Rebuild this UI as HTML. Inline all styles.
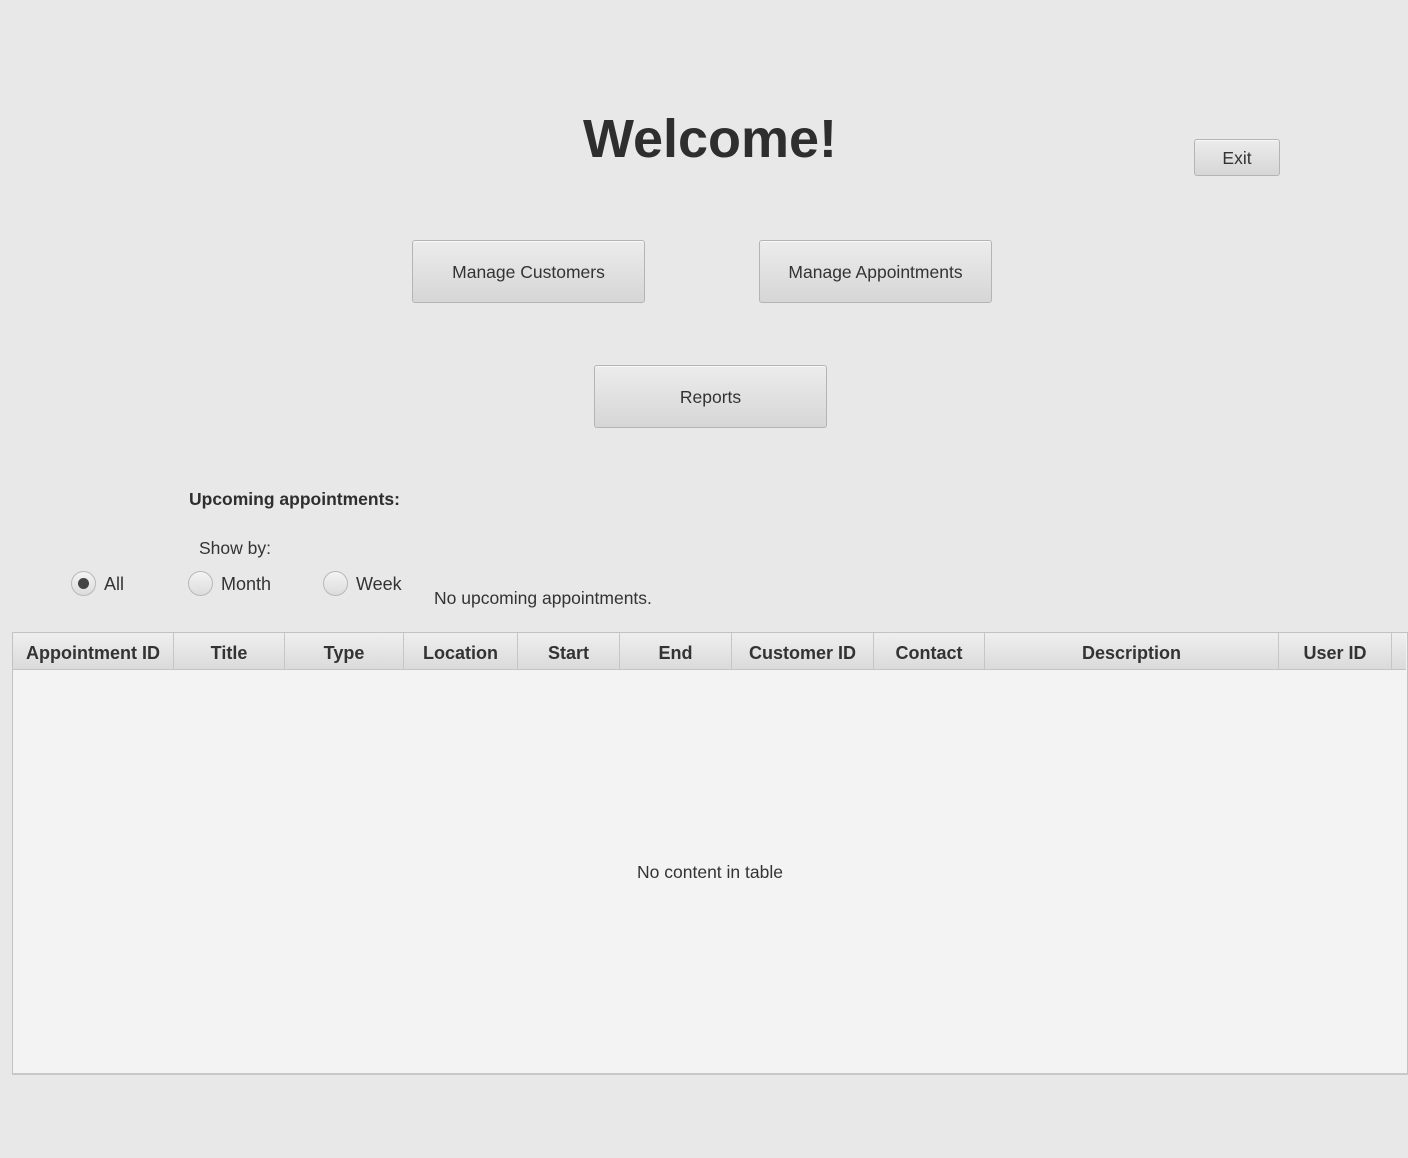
<!DOCTYPE html>
<html><head><style>
*{margin:0;padding:0;box-sizing:border-box}
body{width:1408px;height:1158px;background:#e8e8e8;font-family:"Liberation Sans",sans-serif;color:#333;position:relative;overflow:hidden}
.a{position:absolute}
.btn{position:absolute;border:1px solid #b4b4b4;border-radius:3px;background:linear-gradient(#ececec,#d6d6d6);display:flex;align-items:center;justify-content:center;font-size:17.5px;color:#333;box-shadow:inset 0 1px 0 #f8f8f8;padding-top:2px}
.radio{position:absolute;width:25px;height:25px;border-radius:50%;border:1px solid #b8b8b8;background:linear-gradient(#f4f4f4,#dcdcdc)}
.radio.on::after{content:"";position:absolute;left:6px;top:6px;width:11px;height:11px;border-radius:50%;background:#444}
.lbl{position:absolute;font-size:18px;color:#333}
.hdr{position:absolute;top:633px;height:37px;background:linear-gradient(#efefef,#dadada);border-right:1px solid #c6c6c6;font-weight:bold;font-size:18px;display:flex;align-items:center;justify-content:center;color:#333;padding-top:3px}
</style></head><body>
<div class="a" style="left:0;width:1420px;top:107px;text-align:center;font-size:54px;font-weight:bold;color:#2e2e2e;line-height:64px">Welcome!</div>
<div class="btn" style="left:1194px;top:139px;width:86px;height:37px">Exit</div>
<div class="btn" style="left:412px;top:240px;width:233px;height:63px">Manage Customers</div>
<div class="btn" style="left:759px;top:240px;width:233px;height:63px">Manage Appointments</div>
<div class="btn" style="left:594px;top:365px;width:233px;height:63px">Reports</div>
<div class="a" style="left:189px;top:489px;font-size:17.5px;font-weight:bold;color:#2e2e2e">Upcoming appointments:</div>
<div class="lbl" style="left:199px;top:538px;font-size:17.5px">Show by:</div>
<div class="radio on" style="left:71px;top:571px"></div><div class="lbl" style="left:104px;top:574px">All</div>
<div class="radio" style="left:188px;top:571px"></div><div class="lbl" style="left:221px;top:574px">Month</div>
<div class="radio" style="left:323px;top:571px"></div><div class="lbl" style="left:356px;top:574px">Week</div>
<div class="lbl" style="left:434px;top:588px;font-size:17.5px">No upcoming appointments.</div>
<div class="a" style="left:12px;top:632px;width:1396px;height:443px;border:1px solid #c2c2c2;border-bottom:2px solid #c8c8c8;background:#f3f3f3"></div>
<div class="hdr" style="left:13px;width:161px">Appointment ID</div>
<div class="hdr" style="left:174px;width:111px">Title</div>
<div class="hdr" style="left:285px;width:119px">Type</div>
<div class="hdr" style="left:404px;width:114px">Location</div>
<div class="hdr" style="left:518px;width:102px">Start</div>
<div class="hdr" style="left:620px;width:112px">End</div>
<div class="hdr" style="left:732px;width:142px">Customer ID</div>
<div class="hdr" style="left:874px;width:111px">Contact</div>
<div class="hdr" style="left:985px;width:294px">Description</div>
<div class="hdr" style="left:1279px;width:113px">User ID</div>
<div class="hdr" style="left:1392px;width:14px;border-right:none"></div>
<div class="a" style="left:13px;top:669px;width:1393px;height:1px;background:#c4c4c4"></div>
<div class="a" style="left:0;width:1420px;top:862px;text-align:center;font-size:17.5px">No content in table</div>
</body></html>
